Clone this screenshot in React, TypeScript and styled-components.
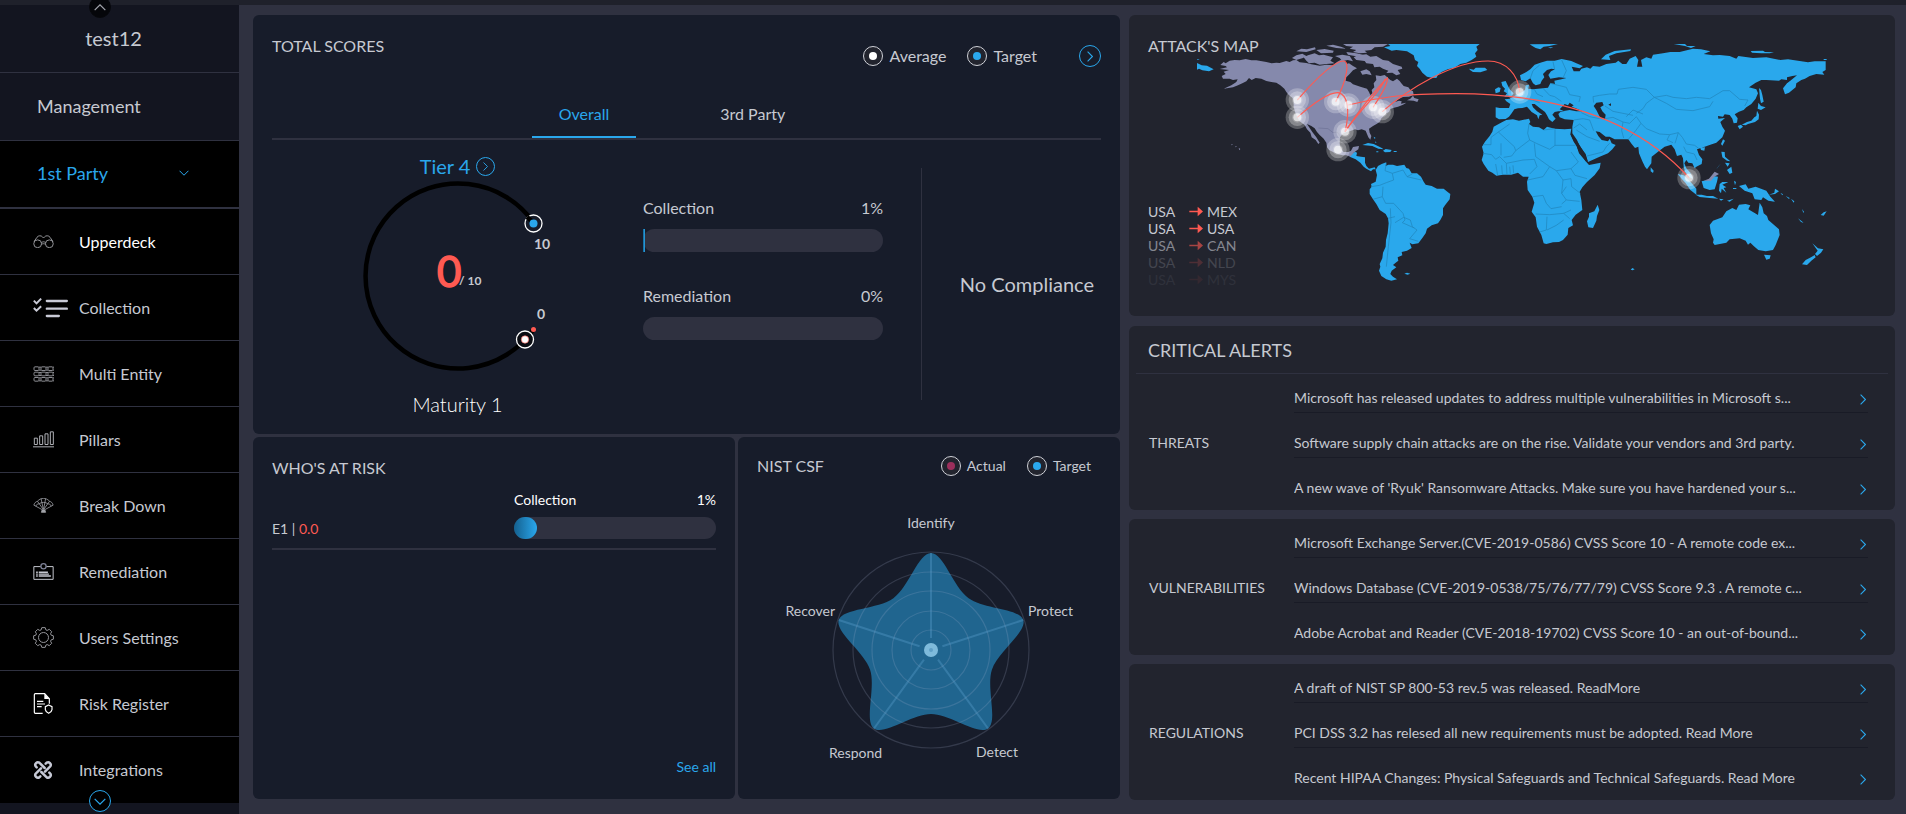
import React from "react";
import styled, { createGlobalStyle } from "styled-components";

const color = {
  page: "#2f3140",
  strip: "#1f212b",
  nav: "#131520",
  black: "#000000",
  scoreCard: "#171c2a",
  feedCard: "#22242e",
  line: "#2f3140",
  rowLine: "#191b26",
  text: "#c6c9d1",
  white: "#ffffff",
  blue: "#2aa7ec",
  red: "#ff5a52",
  land: "#2aa8ec",
  landLine: "#2187bd",
  hot: "#8589ac",
};

const GlobalStyle = createGlobalStyle`
  *, *::before, *::after { box-sizing: border-box; }
  body {
    margin: 0;
    background: ${color.page};
    color: ${color.text};
    font-family: Lato, "Liberation Sans", sans-serif;
    font-size: 16px;
    line-height: 20px;
  }
  h1, h2, h3, p, ul { margin: 0; padding: 0; font-weight: 400; }
  ul { list-style: none; }
  a { color: inherit; text-decoration: none; }
  button { font: inherit; color: inherit; background: none; border: 0; padding: 0; cursor: pointer; }
  svg { display: block; }
`;

/* ---------- page frame ---------- */

const Page = styled.div`
  display: flex;
  flex-direction: column;
  min-height: 100vh;
`;

const TopStrip = styled.div`
  height: 5px;
  background: ${color.strip};
`;

const Columns = styled.div`
  display: flex;
  flex: 1;
`;

const Sidebar = styled.nav`
  position: relative;
  flex: 0 0 239px;
  background: ${color.nav};
`;

const Account = styled.div`
  display: flex;
  align-items: center;
  justify-content: center;
  height: 68px;
  padding: 0 12px 2px 0;
  border-bottom: 1px solid ${color.line};
  font-size: 20px;
`;

const Section = styled.button<{ $open?: boolean }>`
  display: flex;
  align-items: center;
  justify-content: space-between;
  width: 100%;
  height: 68px;
  padding: 0 50px 2px 37px;
  background: ${(p) => (p.$open ? color.black : "transparent")};
  color: ${(p) => (p.$open ? color.blue : color.text)};
  border-bottom: ${(p) => (p.$open ? 2 : 1)}px solid ${color.line};
  font-size: 18px;
`;

const NavList = styled.ul`
  background: ${color.black};
`;

const NavItem = styled.li`
  border-bottom: 1px solid ${color.line};
  &:last-child { border-bottom-color: ${color.black}; }
`;

const NavLink = styled.a<{ $active?: boolean }>`
  display: flex;
  align-items: center;
  height: 65px;
  padding-left: 33px;
  color: ${(p) => (p.$active ? color.white : color.text)};
`;

const IconSlot = styled.span`
  flex: 0 0 46px;
`;

const ScrollButton = styled.button<{ $edge: "top" | "bottom" }>`
  position: absolute;
  left: 89px;
  ${(p) => (p.$edge === "top" ? "top: -9px;" : "bottom: 2px;")}
  display: grid;
  place-items: center;
  width: 22px;
  height: 22px;
  border-radius: 50%;
  border: 1px solid ${(p) => (p.$edge === "top" ? "#07080c" : color.blue)};
  background: ${(p) => (p.$edge === "top" ? "#05060a" : color.black)};
  color: ${(p) => (p.$edge === "top" ? "#a3a6ae" : color.blue)};
`;

const Main = styled.main`
  display: grid;
  flex: 1;
  grid-template-columns: minmax(0, 867fr) minmax(0, 766fr);
  align-items: start;
  gap: 9px;
  padding: 10px 11px 14px 14px;
`;

const ScoreColumn = styled.div`
  display: grid;
  gap: 3px;
`;

const ScoreRow = styled.div`
  display: grid;
  grid-template-columns: minmax(0, 482fr) minmax(0, 382fr);
  gap: 3px;
`;

const FeedColumn = styled.div`
  display: grid;
  gap: 9px;
`;

/* ---------- shared parts ---------- */

const Card = styled.section`
  display: flex;
  flex-direction: column;
  border-radius: 6px;
  background: ${color.scoreCard};
`;

const CardTitle = styled.h2`
  font-size: 16px;
  line-height: 20px;
`;

const Legend = styled.ul<{ $small?: boolean }>`
  display: flex;
  align-items: center;
  gap: 21px;
  font-size: ${(p) => (p.$small ? 14 : 16)}px;
`;

const LegendItem = styled.li`
  display: flex;
  align-items: center;
  gap: 6px;
`;

const Ring = styled.span<{ $dot: string }>`
  display: grid;
  place-items: center;
  width: 20px;
  height: 20px;
  border: 1px solid #cfd1d8;
  border-radius: 50%;
  background: #22242e;
  &::after {
    content: "";
    width: 8px;
    height: 8px;
    border-radius: 50%;
    background: ${(p) => p.$dot};
  }
`;

const CircleLink = styled.a<{ $size: number }>`
  display: grid;
  place-items: center;
  width: ${(p) => p.$size}px;
  height: ${(p) => p.$size}px;
  border: 1px solid ${color.blue};
  border-radius: 50%;
  color: ${color.blue};
`;

const Track = styled.div<{ $height: number }>`
  height: ${(p) => p.$height}px;
  border-radius: 12px;
  background: ${color.line};
`;

const Fill = styled.div<{ $round?: boolean }>`
  height: 100%;
  min-width: ${(p) => (p.$round ? 23 : 0)}px;
  border-radius: ${(p) => (p.$round ? 12 : 0)}px;
  background: linear-gradient(90deg, #14608f, ${color.blue});
`;

const MeterHead = styled.div`
  display: flex;
  justify-content: space-between;
`;

/* ---------- total scores ---------- */

const TotalCard = styled(Card)`
  height: 419px;
  padding: 20px 19px 0;
`;

const TotalHead = styled.header`
  display: flex;
  align-items: flex-start;
  justify-content: space-between;
  height: 60px;
`;

const HeadTools = styled.div`
  display: flex;
  align-items: center;
  gap: 42px;
  padding-top: 10px;
`;

const TitleOffset = styled.div`
  padding-top: 1px;
`;

const Tabs = styled.div`
  display: flex;
  justify-content: center;
  gap: 57px;
  height: 45px;
  padding-right: 29px;
  border-bottom: 2px solid ${color.line};
`;

const Tab = styled.button<{ $active?: boolean }>`
  padding: 0 27px 4px;
  color: ${(p) => (p.$active ? color.blue : color.text)};
  border-bottom: 2px solid ${(p) => (p.$active ? color.blue : "transparent")};
`;

const TotalBody = styled.div`
  display: grid;
  grid-template-columns: 371fr 240fr 218fr;
  flex: 1;
`;

const GaugeColumn = styled.div`
  display: flex;
  flex-direction: column;
  align-items: center;
  padding-top: 14px;
`;

const Tier = styled.div`
  display: flex;
  align-items: center;
  gap: 6px;
  height: 24px;
  color: ${color.blue};
  font-size: 20px;
`;

const Maturity = styled.p`
  margin-top: 18px;
  color: ${color.white};
  font-size: 20px;
  font-weight: 300;
  line-height: 24px;
`;

const Meters = styled.div`
  display: grid;
  align-content: start;
  gap: 34px;
  padding-top: 58px;
`;

const Meter = styled.div`
  display: grid;
  gap: 11px;
`;

const Compliance = styled.div`
  display: grid;
  place-items: center end;
  height: 232px;
  margin: 28px 0 0 38px;
  padding-right: 7px;
  border-left: 1px solid ${color.line};
  font-size: 20px;
`;

/* ---------- who's at risk ---------- */

const RiskCard = styled(Card)`
  height: 362px;
  padding: 21px 19px;
`;

const RiskRow = styled.div`
  display: grid;
  grid-template-columns: 242fr 202fr;
  align-items: end;
  margin-top: 12px;
  padding-bottom: 9px;
  border-bottom: 2px solid ${color.line};
  font-size: 14px;
`;

const RiskMeter = styled.div`
  display: grid;
  gap: 7px;
  color: ${color.white};
`;

const Score = styled.span`
  color: ${color.red};
`;

const SeeAll = styled.a`
  margin: auto 0 1px auto;
  color: ${color.blue};
  font-size: 14px;
`;

/* ---------- nist ---------- */

const NistCard = styled(Card)`
  height: 362px;
`;

const NistHead = styled.header`
  display: flex;
  align-items: center;
  justify-content: space-between;
  padding: 19px 29px 19px 19px;
`;

const Centered = styled.div`
  display: flex;
  justify-content: center;
`;

/* ---------- attacks map ---------- */

const MapCard = styled(Card)`
  display: grid;
  height: 301px;
  margin-bottom: 1px;
  background: ${color.feedCard};
`;

const MapLayer = styled.div`
  grid-area: 1 / 1;
  display: flex;
  justify-content: center;
  padding-top: 29px;
`;

const MapText = styled.div`
  grid-area: 1 / 1;
  z-index: 1;
  display: flex;
  flex-direction: column;
  justify-content: space-between;
  padding: 21px 19px 28px;
`;

const AttackList = styled.ul`
  font-size: 14px;
  line-height: 17px;
`;

const Attack = styled.li<{ $fade: number }>`
  display: grid;
  grid-template-columns: 41px 18px auto;
  align-items: center;
  opacity: ${(p) => p.$fade};
`;

/* ---------- alerts ---------- */

const AlertCard = styled(Card)`
  background: ${color.feedCard};
`;

const AlertTitle = styled.h2`
  margin: 0 7px;
  padding: 12px 12px 11px;
  border-bottom: 1px solid ${color.line};
  font-size: 18px;
  line-height: 24px;
`;

const AlertBody = styled.div`
  display: flex;
  align-items: center;
  padding: 0 27px 7px 20px;
  font-size: 14px;
`;

const AlertLabel = styled.h3`
  flex: 0 0 145px;
  padding-top: 8px;
  font-size: 14px;
`;

const AlertList = styled.ul`
  display: grid;
  flex: 1;
  gap: 6px;
  min-width: 0;
`;

const AlertItem = styled.li`
  border-bottom: 1px solid ${color.rowLine};
  &:last-child { border-bottom-color: transparent; }
`;

const AlertLink = styled.a`
  display: flex;
  align-items: center;
  justify-content: space-between;
  height: 38px;
  padding: 9px 2px 0 0;
`;

const AlertText = styled.span`
  overflow: hidden;
  white-space: nowrap;
`;

const ChevronWrap = styled.span`
  padding-top: 4px;
  color: ${color.blue};
`;

/* ---------- glyphs ---------- */

const Chevron = ({ dir, w, h }: { dir: "up" | "down" | "right"; w: number; h: number }) => {
  const d = { up: "M1 9 L9 1 L17 9", down: "M1 1 L9 9 L17 1", right: "M1 1 L9 9 L1 17" }[dir];
  return (
    <svg width={w} height={h} viewBox={dir === "right" ? "0 0 10 18" : "0 0 18 10"} fill="none" stroke="currentColor" strokeWidth="1.8" aria-hidden="true">
      <path d={d} />
    </svg>
  );
};

const Binoculars = () => (
  <svg width="21" height="13" viewBox="0 0 64 40" fill="none" stroke="#96979b" strokeWidth="3">
    <circle cx="14" cy="27" r="12" />
    <circle cx="50" cy="27" r="12" />
    <path d="M3 20 L12 7 C16 1 25 1 29 6 M61 20 L52 7 C48 1 39 1 35 6 M29 6 L32 9 L35 6 M25 24 C29 20 35 20 39 24 M26 29 C29 26 35 26 38 29" />
  </svg>
);

const Checklist = () => (
  <svg width="35" height="20" viewBox="0 0 104 60" fill="none" stroke="#c9cad6">
    <path d="M2 8 L10 16 L24 2 M2 30 L10 38 L24 25" strokeWidth="6" />
    <path d="M41 9 H101 M41 32 H101 M41 54 H77" strokeWidth="7" strokeLinecap="round" />
  </svg>
);

const Lattice = () => (
  <svg width="21" height="16" viewBox="0 0 63 47" fill="none" stroke="#8c8d92" strokeWidth="3">
    {[0, 1, 2].map((r) =>
      [0, 1, 2].map((c) => (
        <React.Fragment key={`${r}${c}`}>
          <rect x={3 + c * 21} y={2 + r * 16} width="15" height="11" rx="3" />
          <path d={`M${18 + c * 21} ${3 + r * 16} h6 M${18 + c * 21} ${12 + r * 16} h6`} />
        </React.Fragment>
      ))
    )}
  </svg>
);

const Bars = () => (
  <svg width="21" height="17" viewBox="0 0 63 50" fill="none" stroke="#aeafb5" strokeWidth="3">
    <path d="M0 47 H63 M4 40 V21 H13 V40Z M20 40 V14 H29 V40Z M36 40 V8 H45 V40Z M52 40 V2 H61 V40Z" />
  </svg>
);

const Fan = () => (
  <svg width="21" height="15" viewBox="0 0 63 46" fill="none" stroke="#a3a4aa" strokeWidth="2.4">
    <path d="M28 36 L2 22 C3 16 8 11 13 10 C18 4 26 1 31 1 C37 1 45 4 50 10 C55 11 60 16 61 22 L35 36Z" />
    <path d="M30 34 L13 10 M31 34 L24 2 M32 34 L38 2 M33 34 L50 10 M8 25 C9 20 14 18 18 18 C24 12 39 12 45 18 C50 18 54 20 55 25" />
    <path d="M27 37 H36 L38 44 H25Z" fill="#a3a4aa" />
  </svg>
);

const Board = () => (
  <svg width="21" height="17" viewBox="0 0 63 52" fill="none" stroke="#c6c8d0" strokeWidth="3">
    <path d="M23 11 H2 V50 H61 V11 H40" />
    <circle cx="31.500" cy="10" r="8" stroke="#7d8196" strokeWidth="4" />
    <path d="M9 28 H14 M17 28 H45 M9 34 H14 M17 34 H48 M9 40 H14 M17 40 H54" strokeWidth="4.500" />
  </svg>
);

const Gear = () => {
  const teeth = Array.from({ length: 8 }, (_, i) => {
    const a = (i * Math.PI) / 4 - Math.PI / 2;
    return [-0.3, -0.17, 0.17, 0.3]
      .map((o, k) => {
        const r = k === 0 || k === 3 ? 24 : 30;
        return `${(31.5 + r * Math.cos(a + o)).toFixed(1)} ${(31.5 + r * Math.sin(a + o)).toFixed(1)}`;
      })
      .join(" L");
  }).join(" L");
  return (
    <svg width="21" height="21" viewBox="0 0 63 63" fill="none" stroke="#94959a" strokeWidth="3" strokeLinejoin="round">
      <path d={`M${teeth}Z`} />
      <circle cx="31.500" cy="31.500" r="15" />
    </svg>
  );
};

const Register = () => (
  <svg width="20" height="21" viewBox="0 0 60 63" fill="none" stroke="#ffffff" strokeWidth="3.500">
    <path d="M29 61 H7 Q4 61 4 58 V5 Q4 2 7 2 H35 L49 17 V32" />
    <path d="M34 2 L50 18 H34Z" fill="#ffffff" stroke="none" />
    <path d="M12 25 H31 M12 33 H36 M12 41 H26" />
    <path d="M47 36 L57 41 V50 Q56 57 47 61 Q38 57 37 50 V41Z" />
  </svg>
);

const Knot = () => (
  <svg width="20" height="20" viewBox="0 0 60 60" fill="none" stroke="#c6c9d6" strokeWidth="7.500" strokeLinecap="round">
    {[0, 90, 180, 270].map((turn) => (
      <path key={turn} d="M11 22 L8 19 A8 8 0 0 1 19 8 L35 24" transform={`rotate(${turn} 30 30)`} />
    ))}
  </svg>
);

const Arrow = () => (
  <svg width="14" height="11" viewBox="0 0 42 33" aria-hidden="true">
    <path d="M1 14 H26 V2 L42 16.500 L26 31 V19 H1Z" fill={color.red} />
  </svg>
);

/* ---------- charts ---------- */

const Gauge = () => (
  <svg width="200" height="196" viewBox="1 0 200 196" role="img" aria-label="Score 0 of 10">
    <path d="M176.500 44.500 A92.500 92.500 0 1 0 176.500 151.500" fill="none" stroke="#000" strokeWidth="4.500" />
    <circle cx="176.500" cy="151.500" r="2.500" fill={color.red} />
    <circle cx="176.500" cy="45.500" r="8.500" fill={color.scoreCard} stroke="#fff" strokeWidth="1.300" />
    <path d="M170 39 L177 45" stroke="#000" strokeWidth="4.500" />
    <circle cx="176.500" cy="45.500" r="4" fill={color.blue} />
    <circle cx="168" cy="161.500" r="8.500" fill="#0b0d13" stroke="#fff" strokeWidth="1.300" />
    <circle cx="168" cy="161.500" r="3.700" fill="#fff" stroke={color.red} strokeWidth="0.600" />
    <text x="80" y="109" fill={color.red} stroke={color.red} strokeWidth="1.500" fontSize="42">0</text>
    <text x="102" y="107" fill={color.text} fontSize="12" fontWeight="700">/ 10</text>
    <text x="177" y="71" fill={color.text} fontSize="14" fontWeight="700">10</text>
    <text x="180" y="141" fill={color.text} fontSize="14" fontWeight="700">0</text>
  </svg>
);

const polar = (r: number, deg: number): [number, number] => {
  const a = ((deg - 90) * Math.PI) / 180;
  return [193 + r * Math.cos(a), 155 + r * Math.sin(a)];
};

const starPath = () => {
  const pts = Array.from({ length: 10 }, (_, i) => polar(i % 2 ? 64 : 97, i * 36));
  const at = (i: number) => pts[(i + 10) % 10];
  const f = (n: number) => n.toFixed(1);
  return (
    pts.reduce((d, p, i) => {
      const prev = at(i - 1);
      const next = at(i + 1);
      const after = at(i + 2);
      const c1 = [p[0] + (next[0] - prev[0]) / 6, p[1] + (next[1] - prev[1]) / 6];
      const c2 = [next[0] - (after[0] - p[0]) / 6, next[1] - (after[1] - p[1]) / 6];
      return `${d} C${f(c1[0])} ${f(c1[1])} ${f(c2[0])} ${f(c2[1])} ${f(next[0])} ${f(next[1])}`;
    }, `M${f(pts[0][0])} ${f(pts[0][1])}`) + "Z"
  );
};

const radarLabels = [
  { label: "Identify", x: 193, y: 33, anchor: "middle" },
  { label: "Protect", x: 290, y: 121, anchor: "start" },
  { label: "Detect", x: 238, y: 262, anchor: "start" },
  { label: "Respond", x: 91, y: 263, anchor: "start" },
  { label: "Recover", x: 97, y: 121, anchor: "end" },
] as const;

const Radar = () => (
  <svg width="382" height="286" viewBox="0 0 382 286" role="img" aria-label="NIST CSF target scores">
    <path d={starPath()} fill="#20658f" />
    {[98, 78, 59, 39, 20].map((r) => (
      <circle key={r} cx="193" cy="155" r={r} fill="none" stroke="#aab4d2" strokeOpacity="0.2" strokeWidth="1.200" />
    ))}
    {[0, 72, 144, 216, 288].map((deg) => {
      const [x1, y1] = polar(12, deg);
      const [x2, y2] = polar(97, deg);
      return <line key={deg} x1={x1} y1={y1} x2={x2} y2={y2} stroke="#5fa4d0" strokeOpacity="0.35" strokeWidth="2" />;
    })}
    <circle cx="193" cy="155" r="7" fill="#7ebadb" />
    <circle cx="193" cy="155" r="2" fill="#5f9fc6" />
    {radarLabels.map((l) => (
      <text key={l.label} x={l.x} y={l.y} textAnchor={l.anchor} fill={color.text} fontSize="14">{l.label}</text>
    ))}
  </svg>
);

const HOT_LAND = `M300 207 L322 202 L318 198 L302 195 L312 186 L318 190 L330 182 L345 180 L360 181 L378 177 L395 181 L410 181 L440 186 L456 190 L470 188 L480 189
L500 183 L510 186 L520 181 L530 180 L540 187 L560 189 L575 193 L600 197 L620 194 L640 196 L652 186 L668 177 L676 184 L680 192 L688 190 L700 198 L712 205 L700 211 L690 222 L680 232 L678 242
L692 246 L700 253 L722 260 L742 266 L748 276 L752 285 L758 280 L756 270 L764 262 L762 250 L770 240 L768 226 L782 228 L795 225 L803 232 L812 240 L820 244 L832 236 L840 243 L845 250 L852 258 L866 262 L872 270 L880 274 L882 284
L868 290 L850 291 L836 298 L825 306 L838 302 L846 304 L844 311 L860 308 L850 314 L835 320 L820 324 L812 327 L808 336 L800 340 L790 350 L784 356 L782 364 L772 371 L760 378 L748 386 L750 398 L755 408 L752 419 L746 412 L742 402 L738 392 L726 388 L715 391 L706 388 L690 394 L680 396 L668 402 L661 412 L660 430 L662 445
L672 456 L686 456 L694 452 L700 441 L718 438 L716 448 L710 452 L702 458 L692 470 L680 466 L668 466 L655 462 L640 456 L628 450 L622 442 L620 428 L612 416 L600 405 L592 396 L585 385 L575 378 L562 372 L570 384 L578 396 L590 412 L600 428 L596 432 L588 420 L576 412 L572 398 L562 388 L555 375 L540 364 L532 350 L526 335 L522 320 L522 302 L519 294
L508 286 L500 276 L494 266 L482 256 L470 248 L455 246 L440 243 L425 236 L408 234 L396 240 L388 234 L380 244 L368 250 L355 256 L340 262 L326 264 L312 266 L335 256 L350 246 L354 238 L340 240 L330 236 L310 236 L306 228 L318 222 L312 215 L328 210Z
M862 301 L872 296 L880 287 L884 294 L897 298 L893 306 L882 302Z M335 432 l5 2 l-4 2z M347 438 l5 2 l-4 2z M357 443 l5 4 l-3 4z
M552 172 L565 166 L585 160 L598 166 L612 164 L640 172 L632 182 L645 190 L620 192 L600 194 L585 188 L568 190 L560 182Z M517 174 L530 166 L548 161 L560 168 L550 174 L530 180Z
M530 154 L545 146 L562 148 L586 142 L588 148 L560 156Z M590 150 L615 147 L642 152 L640 158 L604 160Z M620 137 L640 134 L664 140 L680 146 L650 144Z
M670 132 L805 132 L790 140 L765 142 L755 150 L735 152 L742 158 L720 160 L700 156 L710 150 L690 146 L700 140 L680 138Z
M702 172 L714 166 L740 163 L752 170 L770 168 L790 180 L806 182 L820 192 L846 200 L848 206 L834 210 L842 222 L830 226 L818 218 L800 219 L806 212 L790 206 L780 200 L764 202 L760 192 L740 190 L735 183 L710 180Z
M646 168 L668 164 L690 168 L700 184 L684 180 L668 184 L660 174Z M722 214 L740 208 L750 214 L756 226 L740 222 L728 224Z M680 156 L710 160 L730 164 L705 168 L685 164Z`;

const WEST_LAND = `M230 188 L246 196 L262 197 L282 208 L268 214 L248 211 L238 206 L230 210Z M232 177 l8 0 l-6 3z
M805 132 L1080 132 L1070 140 L1074 150 L1066 160 L1070 170 L1056 180 L1040 188 L1022 192 L1004 203 L984 208 L966 216 L955 224 L950 234 L936 233 L922 230 L908 218 L900 206 L892 198 L896 186 L886 180 L882 166 L862 154 L830 150 L816 152 L793 142 L812 138Z
M1048 206 L1062 209 L1068 203 L1096 203 L1103 210 L1082 217 L1060 216 L1052 211Z
M728 435 L745 429 L762 432 L785 443 L792 448 L776 446 L758 438Z M790 452 L798 447 L816 450 L812 456 L796 457Z M822 453 h9 v3 h-9z M770 454 h6 v3 h-6z M762 410 l6 4 l-4 2z M766 424 l5 4 l-4 0z
M690 470 L696 462 L706 455 L712 458 L710 468 L724 470 L736 472 L736 488 L740 498 L748 506 L765 502 L768 508 L760 508 L754 514 L740 506 L732 500 L722 488 L708 478Z
M768 510 L775 498 L786 492 L800 487 L798 498 L806 494 L820 494 L832 498 L854 494 L860 504 L868 506 L876 520 L892 520 L904 530 L912 545 L918 554 L936 558 L952 566 L972 566 L984 576 L992 582 L990 598 L976 616 L970 625 L970 645 L962 660 L955 670 L936 676 L922 686 L918 700 L908 714 L896 730 L878 733 L870 728 L876 744 L862 752 L846 756 L848 766 L834 772 L836 782 L828 788 L820 795 L830 802 L816 812 L812 822 L820 830 L832 838 L815 842 L800 838 L785 828 L778 812 L782 800 L780 792 L788 775 L790 758 L798 740 L799 720 L804 700 L807 670 L805 655 L798 642 L780 630 L770 612 L760 598 L750 582 L750 568 L756 560 L754 552 L768 545 L772 525Z
M854 821 l8 -3 l10 3 l-8 3z`;

const EAST_LAND = `M8 366 L20 360 L40 358 L58 362 L88 356 L92 366 L88 372 L100 380 L118 382 L132 390 L142 380 L165 386 L195 388 L215 386 L212 403 L222 425 L232 440 L238 460 L250 474 L262 488 L268 495 L303 488 L300 505 L285 525 L262 546 L248 562 L240 575 L245 600 L248 630 L228 644 L216 660 L220 676 L206 684 L204 704 L190 720 L178 726 L160 727 L140 732 L132 730 L125 705 L112 680 L108 652 L96 635 L104 608 L98 590 L84 570 L82 545 L87 530 L70 530 L55 518 L35 524 L10 524 L-10 527 L-22 518 L-34 512 L-48 492 L-54 480 L-48 460 L-53 440 L-44 425 L-30 408 L-22 395 L-18 380Z
M294 614 L299 630 L292 648 L290 662 L280 684 L266 682 L262 664 L268 650 L268 640 L284 634Z
M-12 322 L0 324 L28 324 L32 312 L20 304 L15 298 L30 296 L40 290 L55 282 L68 276 L76 270 L78 256 L88 254 L86 266 L100 268 L130 265 L145 263 L152 250 L166 252 L164 242 L185 238 L200 234 L178 232 L152 236 L146 225 L154 214 L166 208 L155 206 L142 210 L130 222 L134 232 L126 242 L122 252 L108 256 L100 250 L92 235 L78 244 L64 240 L61 226 L80 216 L92 208 L105 194 L122 188 L142 182 L165 182 L186 177 L215 183 L230 190 L250 198 L240 205 L216 200 L222 214 L240 214 L245 206 L262 202 L272 206 L280 198 L300 200 L320 192 L348 188 L356 182 L368 192 L380 192 L390 176 L408 168 L416 180 L412 200 L428 200 L424 180 L440 172 L455 176 L460 164 L490 160 L512 156 L540 156 L580 146 L604 148 L632 154 L612 162 L640 166 L660 165 L690 168 L710 176 L716 168 L760 174 L800 172 L842 180 L865 178 L925 187 L945 184 L978 184 L978 210 L968 216 L974 224 L950 222 L930 228 L916 236 L905 240 L890 250 L888 262 L868 278 L856 283 L850 265 L862 250 L872 242 L892 226 L878 228 L862 232 L862 240 L845 238 L838 242 L800 240 L785 240 L768 248 L748 262 L770 268 L775 280 L768 296 L755 312 L740 322 L732 330 L718 335 L705 343 L714 355 L712 368 L702 370 L698 356 L690 345 L675 343 L670 350 L655 348 L656 356 L676 354 L662 366 L668 380 L676 392 L668 412 L650 428 L632 434 L615 440 L592 448 L598 465 L608 478 L606 492 L590 500 L585 505 L578 490 L566 488 L560 480 L554 490 L560 505 L572 518 L580 536 L570 532 L556 515 L552 500 L550 475 L545 464 L532 468 L525 448 L515 434 L495 440 L475 455 L456 470 L455 490 L442 508 L436 500 L428 484 L418 460 L416 440 L406 444 L396 432 L386 418 L370 418 L345 418 L330 410 L318 410 L300 396 L288 394 L296 408 L306 420 L325 424 L330 416 L336 430 L348 435 L338 448 L325 460 L300 470 L265 486 L258 462 L240 438 L232 420 L218 400 L218 380 L222 360 L195 358 L180 352 L176 342 L182 336 L195 334 L176 334 L165 336 L158 344 L168 356 L158 366 L148 358 L142 346 L136 336 L120 324 L105 312 L96 312 L100 322 L112 334 L128 344 L120 346 L116 358 L112 346 L96 336 L82 320 L68 324 L55 325 L44 328 L36 340 L28 350 L18 357 L-2 358 L-12 352Z
M5 246 L18 243 L24 256 L30 268 L42 280 L36 288 L14 290 L22 280 L12 274 L16 266 L8 258Z M-14 268 L-4 262 L3 264 L0 276 L-12 280Z
M90 133 L175 132 L150 138 L132 140 L122 148 L108 144 L98 138Z M145 142 h16 l-8 3z M304 178 L318 164 L345 153 L394 148 L392 153 L350 160 L328 168 L332 180Z M522 132 L556 132 L562 138 L588 138 L574 144 L556 138Z M753 153 L790 152 L796 156 L823 157 L810 160 L785 160 L757 158Z M972 177 h9 v3 h-9z
M778 264 L784 270 L788 285 L792 305 L784 310 L781 296Z M776 308 L784 318 L798 322 L784 330 L774 326Z M772 332 L778 344 L777 358 L766 366 L745 372 L738 376 L726 374 L742 366 L755 362 L764 352 L770 348Z M714 378 L724 374 L730 380 L720 388Z
M664 432 L670 418 L676 422 L668 437Z M602 444 L616 442 L614 452 L604 450Z M453 502 L462 512 L460 519 L453 514Z M665 455 L675 456 L676 470 L692 484 L682 482 L668 472Z M676 488 L690 490 L684 500Z M682 510 L695 500 L698 518 L690 522Z M664 490 L650 508 L655 500Z
M534 522 L552 526 L575 548 L590 566 L590 584 L572 570 L558 550 L546 536Z M588 584 L606 584 L622 588 L640 588 L656 596 L630 594 L600 591Z M658 596 L672 598 L664 602Z M682 602 L702 596 L690 605Z M606 544 L625 540 L640 528 L655 530 L652 545 L645 568 L630 570 L612 564Z
M660 552 L668 546 L686 546 L668 554 L680 562 L672 564 L680 578 L666 566 L664 580 L658 572Z M703 542 L709 546 L706 556Z M700 564 h10 v3 h-10z M718 558 L738 553 L746 566 L768 560 L800 572 L812 590 L826 605 L806 602 L790 592 L785 600 L765 598 L758 580 L735 572Z M808 584 L824 578 L826 566 L838 574 L826 582Z M842 578 l8 5 l-2 3z M858 588 l12 6 l-2 3z M874 596 l10 8 l-2 4z
M630 675 L640 662 L668 652 L680 634 L698 624 L710 630 L718 614 L738 612 L752 616 L746 628 L775 645 L780 608 L788 622 L792 640 L802 648 L806 660 L838 688 L840 705 L828 735 L820 750 L798 754 L776 750 L762 738 L752 728 L745 734 L738 722 L720 715 L690 718 L680 728 L645 735 L640 728 L642 718 L634 700Z M793 764 L813 766 L810 776 L800 779Z
M938 730 L955 745 L971 748 L964 758 L952 768 L946 762 L954 752Z M945 765 L948 772 L935 782 L922 795 L907 793 L918 780 L934 772Z M895 655 L912 668 L904 666Z M963 645 L972 637 L981 634 L972 647Z M907 627 l6 8 l-2 4z M393 809 l5 -5 l7 4 l-6 3z`;

const INLAND_WATER = `M180 328 L195 312 L205 316 L210 308 L222 316 L216 320 L232 326 L248 334 L230 334 L210 330 L192 333Z M282 318 L290 308 L308 306 L312 316 L302 322 L308 334 L318 344 L316 356 L302 354 L296 342 L290 330Z M212 403 L224 412 L240 436 L256 462 L264 484 L258 484 L246 466 L236 452 L230 436Z M326 314 L334 310 L334 318Z`;

const EAST_BORDERS = `M104 268 L112 282 L130 290 M130 265 L150 286 L165 290 M152 250 L200 262 L210 284 L242 290 L238 306 M165 290 L185 304 M70 296 L98 300 L120 308 M92 235 L100 212 L120 195 M165 208 L160 185 M190 234 L200 212 L186 180
M282 308 L280 290 L300 286 L330 282 L352 282 L356 268 L400 262 L440 268 L464 292 M464 292 L500 286 L520 292 L560 296 L590 292 L630 296 L640 290 L670 272 L690 272 L720 298 L745 300 L735 318 M464 292 L440 310 L430 326 L410 340 M464 292 L500 310 L530 328 L580 332 L630 320 L640 304
M316 318 L340 334 L370 340 L400 346 M316 356 L340 352 L370 366 L390 370 L410 350 M222 360 L250 356 L270 360 L282 392 M245 338 L270 350 L300 356 M370 366 L366 392 L372 414 M410 350 L424 370 L408 392 L386 418 M424 370 L440 386 L480 402 L510 404 L536 398 L548 412 M510 404 L502 420 L520 428 M536 398 L526 430 M548 412 L560 432 L585 436 L598 446 M552 440 L560 456 L584 462 L592 480 M430 342 L400 330 L380 350 M222 384 L240 372 L262 390 M230 390 L262 410 L300 424 M262 468 L310 456 L320 440 L330 430
M88 372 L84 400 L90 420 L48 452 M132 390 L165 386 M166 388 V436 H228 M166 436 L150 448 L110 430 L90 420 M-50 434 H-26 V412 L-4 396 L30 372 M-4 396 L44 440 L48 452 L36 468 L12 472 M4 466 V430 M-50 460 L-24 464 L-12 478 L0 470 L20 490 L22 524 M20 490 L70 480 L104 478 L112 500 L90 522 M104 430 L108 470 L150 500 L170 512 L214 506 L236 486 M236 486 L214 456 M214 506 L226 526 L262 536 M84 540 L130 530 L150 500 M170 512 L190 540 L186 580 L200 600 L186 612 M100 590 L130 586 L140 610 L154 626 L186 620 M190 540 L214 536 L216 560 L242 580 M186 580 L200 560 M200 600 L240 604 M108 642 L150 644 L192 640 L214 630 M120 696 L140 690 L142 650 M142 690 L170 676 L192 660 M192 640 L210 656 M-12 492 L-6 526 M6 496 L8 524 M30 500 L32 522 M40 496 L42 520`;

const WEST_BORDERS = `M800 490 L796 512 L818 520 L822 540 L800 548 M818 520 L850 510 L862 530 L878 522 M862 530 L905 540 M754 560 L780 556 L800 548 M760 598 L788 590 L798 610 L822 610 L850 640 L856 660 L848 668 M788 590 L790 560 M805 655 L826 650 M812 625 L814 668 L806 740 L800 800 M826 668 L852 652 L872 660 L878 680 L892 690 L870 716 M848 668 L884 684 M870 716 L896 724`;

const HOT_BORDERS = `M596 384 L625 386 L640 398 L652 396 L662 408`;

const attackPaths = [
  "M533 300 C590 235 645 183 672 183 C690 183 684 235 648 305",
  "M533 352 C590 302 632 276 656 278 C684 284 692 330 676 395",
  "M676 395 C720 330 775 260 803 234 C805 250 785 285 760 322",
  "M676 395 C715 335 780 280 797 236",
  "M788 335 C860 270 1000 183 1105 183 C1160 183 1196 225 1200 276",
  "M686 315 C770 292 850 281 1010 281 C1330 281 1560 370 1708 533",
];

const attackPoints = [
  [533, 300], [533, 352], [648, 305], [686, 315], [760, 322],
  [788, 335], [676, 395], [655, 449], [1200, 276], [1708, 533],
];

const WorldMap = () => (
  <svg width="630" height="240" viewBox="232 132 1890 720" role="img" aria-label="World map of attacks">
    <path d={WEST_LAND} fill={color.land} />
    <g transform="translate(1140 0)">
      <path d={EAST_LAND} fill={color.land} />
      <path d={INLAND_WATER} fill={color.feedCard} />
      <path d="M612 542 L628 536 L645 515 L658 522 L644 530 L634 542Z" fill={color.hot} />
      <path d={EAST_BORDERS} fill="none" stroke={color.landLine} strokeWidth="2.200" />
    </g>
    <path d={WEST_BORDERS} fill="none" stroke={color.landLine} strokeWidth="2.200" />
    <path d={HOT_LAND} fill={color.hot} />
    <path d={HOT_BORDERS} fill="none" stroke="#6d7196" strokeWidth="2" />
    {attackPoints.map(([x, y]) => (
      <g key={`${x}-${y}`} fill="#fff">
        <circle cx={x} cy={y} r="35" fillOpacity="0.250" />
        <circle cx={x} cy={y} r="26" fillOpacity="0.280" />
        <circle cx={x} cy={y} r="16" fillOpacity="0.200" />
      </g>
    ))}
    {attackPaths.map((d) => (
      <path key={d} d={d} fill="none" stroke={color.red} strokeWidth="3.500" />
    ))}
    {attackPoints.map(([x, y]) => (
      <circle key={`${x}-${y}`} cx={x} cy={y} r="12" fill="#fff" fillOpacity="0.650" />
    ))}
  </svg>
);

/* ---------- data ---------- */

const navItems = [
  { label: "Upperdeck", icon: <Binoculars />, active: true },
  { label: "Collection", icon: <Checklist /> },
  { label: "Multi Entity", icon: <Lattice /> },
  { label: "Pillars", icon: <Bars /> },
  { label: "Break Down", icon: <Fan /> },
  { label: "Remediation", icon: <Board /> },
  { label: "Users Settings", icon: <Gear /> },
  { label: "Risk Register", icon: <Register /> },
  { label: "Integrations", icon: <Knot /> },
];

const attacks = [
  { to: "MEX", fade: 1 },
  { to: "USA", fade: 1 },
  { to: "CAN", fade: 0.6 },
  { to: "NLD", fade: 0.2 },
  { to: "MYS", fade: 0.08 },
];

const alerts = [
  {
    label: "THREATS",
    items: [
      "Microsoft has released updates to address multiple vulnerabilities in Microsoft s...",
      "Software supply chain attacks are on the rise. Validate your vendors and 3rd party.",
      "A new wave of 'Ryuk' Ransomware Attacks. Make sure you have hardened your s...",
    ],
  },
  {
    label: "VULNERABILITIES",
    items: [
      "Microsoft Exchange Server.(CVE-2019-0586) CVSS Score 10 - A remote code ex...",
      "Windows Database (CVE-2019-0538/75/76/77/79) CVSS Score 9.3 . A remote c...",
      "Adobe Acrobat and Reader (CVE-2018-19702) CVSS Score 10 - an out-of-bound...",
    ],
  },
  {
    label: "REGULATIONS",
    items: [
      "A draft of NIST SP 800-53 rev.5 was released. ReadMore",
      "PCI DSS 3.2 has relesed all new requirements must be adopted. Read More",
      "Recent HIPAA Changes: Physical Safeguards and Technical Safeguards. Read More",
    ],
  },
];

const scores = [
  { label: "Collection", value: 1 },
  { label: "Remediation", value: 0 },
];

export default function App() {
  return (
    <Page>
      <GlobalStyle />
      <TopStrip />
      <Columns>
        <Sidebar>
          <ScrollButton $edge="top" aria-label="Scroll up">
            <Chevron dir="up" w={12} h={7} />
          </ScrollButton>
          <Account>test12</Account>
          <Section>Management</Section>
          <Section $open>
            1st Party
            <Chevron dir="down" w={10} h={6} />
          </Section>
          <NavList>
            {navItems.map((item) => (
              <NavItem key={item.label}>
                <NavLink href="#" $active={item.active}>
                  <IconSlot>{item.icon}</IconSlot>
                  {item.label}
                </NavLink>
              </NavItem>
            ))}
          </NavList>
          <ScrollButton $edge="bottom" aria-label="Scroll down">
            <Chevron dir="down" w={12} h={7} />
          </ScrollButton>
        </Sidebar>

        <Main>
          <ScoreColumn>
            <TotalCard>
              <TotalHead>
                <TitleOffset>
                  <CardTitle>TOTAL SCORES</CardTitle>
                </TitleOffset>
                <HeadTools>
                  <Legend>
                    <LegendItem><Ring $dot="#ffffff" />Average</LegendItem>
                    <LegendItem><Ring $dot={color.blue} />Target</LegendItem>
                  </Legend>
                  <CircleLink href="#" $size={22} aria-label="Open total scores">
                    <Chevron dir="right" w={6} h={11} />
                  </CircleLink>
                </HeadTools>
              </TotalHead>
              <Tabs role="tablist">
                <Tab role="tab" aria-selected="true" $active>Overall</Tab>
                <Tab role="tab" aria-selected="false">3rd Party</Tab>
              </Tabs>
              <TotalBody>
                <GaugeColumn>
                  <Tier>
                    Tier 4
                    <CircleLink href="#" $size={19} aria-label="Open tier">
                      <Chevron dir="right" w={5} h={9} />
                    </CircleLink>
                  </Tier>
                  <Gauge />
                  <Maturity>Maturity 1</Maturity>
                </GaugeColumn>
                <Meters>
                  {scores.map((s) => (
                    <Meter key={s.label}>
                      <MeterHead><span>{s.label}</span><span>{s.value}%</span></MeterHead>
                      <Track $height={23}>
                        <Fill style={{ width: `${s.value}%` }} />
                      </Track>
                    </Meter>
                  ))}
                </Meters>
                <Compliance>No Compliance</Compliance>
              </TotalBody>
            </TotalCard>

            <ScoreRow>
              <RiskCard>
                <CardTitle>WHO'S AT RISK</CardTitle>
                <RiskRow>
                  <span>E1 | <Score>0.0</Score></span>
                  <RiskMeter>
                    <MeterHead><span>Collection</span><span>1%</span></MeterHead>
                    <Track $height={22}>
                      <Fill $round style={{ width: "1%" }} />
                    </Track>
                  </RiskMeter>
                </RiskRow>
                <SeeAll href="#">See all</SeeAll>
              </RiskCard>
              <NistCard>
                <NistHead>
                  <CardTitle>NIST CSF</CardTitle>
                  <Legend $small>
                    <LegendItem><Ring $dot="#9c2f5c" />Actual</LegendItem>
                    <LegendItem><Ring $dot={color.blue} />Target</LegendItem>
                  </Legend>
                </NistHead>
                <Centered><Radar /></Centered>
              </NistCard>
            </ScoreRow>
          </ScoreColumn>

          <FeedColumn>
            <MapCard>
              <MapLayer><WorldMap /></MapLayer>
              <MapText>
                <CardTitle>ATTACK'S MAP</CardTitle>
                <AttackList>
                  {attacks.map((a) => (
                    <Attack key={a.to} $fade={a.fade}>
                      <span>USA</span>
                      <Arrow />
                      <span>{a.to}</span>
                    </Attack>
                  ))}
                </AttackList>
              </MapText>
            </MapCard>
            {alerts.map((group, i) => (
              <AlertCard key={group.label}>
                {i === 0 && <AlertTitle>CRITICAL ALERTS</AlertTitle>}
                <AlertBody>
                  <AlertLabel>{group.label}</AlertLabel>
                  <AlertList>
                    {group.items.map((text) => (
                      <AlertItem key={text}>
                        <AlertLink href="#">
                          <AlertText>{text}</AlertText>
                          <ChevronWrap><Chevron dir="right" w={6} h={11} /></ChevronWrap>
                        </AlertLink>
                      </AlertItem>
                    ))}
                  </AlertList>
                </AlertBody>
              </AlertCard>
            ))}
          </FeedColumn>
        </Main>
      </Columns>
    </Page>
  );
}
